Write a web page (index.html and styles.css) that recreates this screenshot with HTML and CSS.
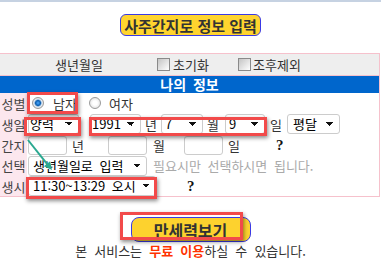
FILE: index.html
```html
<!DOCTYPE html>
<html lang="ko">
<head>
    <meta charset="UTF-8">
    <meta name="viewport" content="width=device-width, initial-scale=1.0">
    <title>사주간지로 정보 입력</title>
    <link rel="stylesheet" href="styles.css">
</head>
<body>
    <div class="page">
        <div class="head">
            <button class="title-btn">사주간지로 정보 입력</button>
        </div>

        <div class="box">
            <div class="opts">
                <span class="opt-name">생년월일</span>
                <label class="chk chk-reset"><input type="checkbox"><span>초기화</span></label>
                <label class="chk chk-jh"><input type="checkbox"><span>조후제외</span></label>
            </div>
            <div class="bar">나의 정보</div>

            <div class="row row-sex">
                <div class="lbl">성별</div>
                <div class="cell">
                    <input type="radio" name="sex" class="radio r-male" checked>
                    <span class="txt t-male">남자</span>
                    <input type="radio" name="sex" class="radio r-female">
                    <span class="txt t-female">여자</span>
                </div>
            </div>

            <div class="row row-birth">
                <div class="lbl">생일</div>
                <div class="cell">
                    <select class="sel s-cal"><option>양력</option></select>
                    <select class="sel s-year"><option>1991</option></select>
                    <span class="unit u-year">년</span>
                    <select class="sel s-month"><option>7</option></select>
                    <span class="unit u-month">월</span>
                    <select class="sel s-day"><option>9</option></select>
                    <span class="unit u-day">일</span>
                    <select class="sel s-leap"><option>평달</option></select>
                </div>
            </div>

            <div class="row row-ganji">
                <div class="lbl">간지</div>
                <div class="cell">
                    <input type="text" class="gj">
                    <span class="unit g-year">년</span>
                    <input type="text" class="gj">
                    <span class="unit g-month">월</span>
                    <input type="text" class="gj">
                    <span class="unit g-day">일</span>
                    <span class="qm">?</span>
                </div>
            </div>

            <div class="row row-pick">
                <div class="lbl">선택</div>
                <div class="cell">
                    <select class="sel s-mode"><option>생년월일로 입력</option></select>
                    <span class="hint">필요시만 선택하시면 됩니다.</span>
                </div>
            </div>

            <div class="row row-time">
                <div class="lbl">생시</div>
                <div class="cell">
                    <select class="sel s-time"><option>11:30~13:29 오시</option></select>
                    <span class="qm q-time">?</span>
                </div>
            </div>
        </div>

        <div class="foot">
            <button class="go-btn">만세력보기</button>
            <p class="notice">본 서비스는 <b>무료 이용</b>하실 수 있습니다.</p>
        </div>

        <!-- annotation marks drawn over the form -->
        <span class="mark m-sex"></span>
        <span class="mark m-cal"></span>
        <span class="mark m-date"></span>
        <span class="mark m-time"></span>
        <span class="mark m-go"></span>
        <svg class="arrow" width="40" height="40" viewBox="0 0 40 40">
            <line x1="8" y1="4" x2="27" y2="27.8" stroke="#2aa890" stroke-width="2"/>
            <polygon points="32,34 23.9,30.2 30.1,25.2" fill="#2aa890"/>
        </svg>
    </div>
</body>
</html>
```

FILE: styles.css
```css
body {
    margin: 0;
    font-family: "Noto Sans CJK KR", "Noto Sans", sans-serif;
    font-size: 13px;
    color: #333333;
    background: #ffffff;
    overflow: hidden;
}

.page {
    position: relative;
    width: 381px;
    border-top: 2px solid #c6d2e2;
}

.head {
    height: 51px;
    display: flex;
    justify-content: center;
    padding-top: 12px;
    box-sizing: border-box;
}

.title-btn {
    height: 22px;
    width: 141px;
    padding: 0;
    background: #ffd42e;
    border: 1px solid #3a3ae6;
    border-radius: 6px;
    font-family: inherit;
    font-size: 15px;
    font-weight: bold;
    line-height: 1;
    color: #333333;
}

.box {
    margin-left: -1px;
    width: 381px;
    box-sizing: border-box;
    border: 1px solid #f6c1cc;
}

.opts {
    height: 21px;
    display: flex;
    align-items: center;
    background: #eeeeee;
    border-bottom: 1px solid #f6c1cc;
    line-height: 1;
    word-spacing: 3px;
}
.opt-name {
    margin-left: 55px;
    width: 52px;
}
.chk {
    display: flex;
    align-items: center;
}
.chk-reset {
    margin-left: 50px;
    width: 81px;
}
.chk input {
    appearance: none;
    width: 13px;
    height: 13px;
    margin: 0 3px 0 0;
    border: 1px solid #8a8a8a;
    background: linear-gradient(135deg, #c4c4c4, #ffffff);
    box-sizing: border-box;
}
.chk-jh input {
    margin-right: 2px;
}

.bar {
    height: 17px;
    background: #0066cc;
    color: #ffffff;
    font-size: 14px;
    font-weight: bold;
    line-height: 17px;
    text-align: center;
    word-spacing: 3px;
}

.row {
    display: flex;
    height: 20px;
    line-height: 1;
}
.row-birth {
    height: 22px;
}
.row-pick {
    height: 21px;
}
.lbl {
    width: 27px;
    flex-shrink: 0;
    display: flex;
    align-items: center;
    justify-content: center;
    background: #fce7ee;
    color: #444444;
}
.cell {
    display: flex;
    align-items: center;
    padding-left: 1px;
}

.txt,
.unit {
    white-space: nowrap;
    flex-shrink: 0;
}
.unit {
    box-sizing: border-box;
}

.radio {
    appearance: none;
    width: 12px;
    height: 12px;
    margin: 0;
    flex-shrink: 0;
    border: 1px solid #9a9a9a;
    border-radius: 50%;
    box-sizing: border-box;
    background: radial-gradient(circle, #ffffff 30%, #d6d6d6 100%);
}
.radio:checked {
    background: radial-gradient(circle, #4aa8ff 0, #0a5fb0 2.5px, #e8f0f8 4px, #cfcfcf 6px);
}
.r-male {
    margin-left: 4px;
}
.t-male {
    margin-left: 9px;
    width: 26px;
}
.r-female {
    margin-left: 10px;
}
.t-female {
    margin-left: 8px;
}

.sel {
    appearance: none;
    flex-shrink: 0;
    height: 20px;
    margin: 0;
    padding: 0 0 0 3px;
    border: 1px solid #cccccc;
    border-radius: 3px;
    box-sizing: border-box;
    font-family: inherit;
    font-size: 13px;
    line-height: 18px;
    color: #000000;
    background-color: #ffffff;
    background-image: linear-gradient(45deg, transparent 50%, #111111 50%), linear-gradient(135deg, #111111 50%, transparent 50%);
    background-position: right 9px center, right 5px center;
    background-size: 4px 4px;
    background-repeat: no-repeat;
    word-spacing: 3px;
}
.s-cal {
    width: 51px;
    padding-left: 1px;
}
.s-year {
    width: 51px;
    margin-left: 11px;
    padding-left: 1px;
}
.u-year {
    width: 20px;
    padding-left: 4px;
}
.s-month {
    width: 42px;
}
.u-month {
    width: 22px;
    padding-left: 4px;
}
.s-day {
    width: 40px;
}
.u-day {
    width: 22px;
    padding-left: 5px;
}
.s-leap {
    width: 53px;
    padding-left: 5px;
}

.gj {
    flex-shrink: 0;
    width: 39px;
    height: 19px;
    margin: 0;
    padding: 0;
    border: 1px solid #cccccc;
    border-radius: 3px;
    box-sizing: border-box;
}
.g-year {
    width: 41px;
    padding-left: 5px;
}
.g-month {
    width: 37px;
    padding-left: 6px;
}
.g-day {
    width: 53px;
    padding-left: 5px;
}

.qm {
    font-family: "Liberation Serif", serif;
    font-weight: bold;
    font-size: 15px;
    color: #111111;
}
.q-time {
    margin-left: 31px;
}

.s-mode {
    width: 119px;
    padding-left: 4px;
}
.hint {
    margin-left: 6px;
    color: #aaaaaa;
    white-space: nowrap;
    word-spacing: 3px;
}
.s-time {
    width: 128px;
    padding-left: 4px;
}

.foot {
    margin-top: 20px;
    display: flex;
    flex-direction: column;
    align-items: center;
}
.go-btn {
    width: 120px;
    height: 25px;
    padding: 0;
    background: #fdd22e;
    border: 1px solid #3a3ae6;
    border-radius: 8px;
    font-family: inherit;
    font-size: 16px;
    font-weight: bold;
    line-height: 1;
    color: #333333;
}
.notice {
    margin: 2px 0 0;
    line-height: 14px;
    white-space: nowrap;
    word-spacing: 3.5px;
}
.notice b {
    color: #ff3300;
}

.mark {
    position: absolute;
    box-sizing: border-box;
    border: 3px solid #f24a4a;
    box-shadow: 1px 2px 4px rgba(0, 0, 0, 0.45);
}
.m-sex {
    left: 27px;
    top: 90px;
    width: 51px;
    height: 22px;
}
.m-cal {
    left: 24px;
    top: 115px;
    width: 57px;
    height: 19px;
}
.m-date {
    left: 89px;
    top: 115px;
    width: 178px;
    height: 19px;
}
.m-time {
    left: 26px;
    top: 175px;
    width: 131px;
    height: 22px;
}
.m-go {
    left: 120px;
    top: 210px;
    width: 123px;
    height: 28px;
}

.arrow {
    position: absolute;
    left: 20px;
    top: 134px;
}
```
